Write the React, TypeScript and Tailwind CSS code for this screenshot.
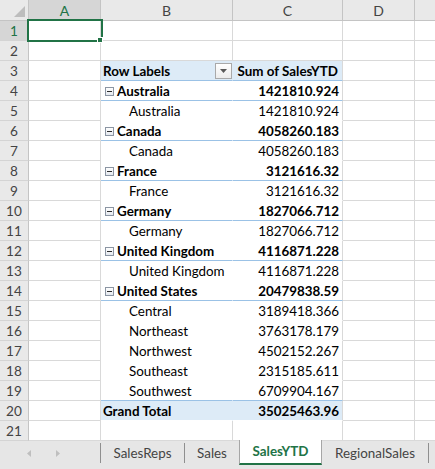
import React from "react";

type Kind = "header" | "country" | "detail" | "total";
type PRow = { kind: Kind; label: string; value: string; last?: boolean };

const pivot: Record<number, PRow> = {
  3: { kind: "header", label: "Row Labels", value: "Sum of SalesYTD" },
  4: { kind: "country", label: "Australia", value: "1421810.924" },
  5: { kind: "detail", label: "Australia", value: "1421810.924" },
  6: { kind: "country", label: "Canada", value: "4058260.183" },
  7: { kind: "detail", label: "Canada", value: "4058260.183" },
  8: { kind: "country", label: "France", value: "3121616.32" },
  9: { kind: "detail", label: "France", value: "3121616.32" },
  10: { kind: "country", label: "Germany", value: "1827066.712" },
  11: { kind: "detail", label: "Germany", value: "1827066.712" },
  12: { kind: "country", label: "United Kingdom", value: "4116871.228" },
  13: { kind: "detail", label: "United Kingdom", value: "4116871.228" },
  14: { kind: "country", label: "United States", value: "20479838.59" },
  15: { kind: "detail", label: "Central", value: "3189418.366" },
  16: { kind: "detail", label: "Northeast", value: "3763178.179" },
  17: { kind: "detail", label: "Northwest", value: "4502152.267" },
  18: { kind: "detail", label: "Southeast", value: "2315185.611" },
  19: { kind: "detail", label: "Southwest", value: "6709904.167", last: true },
  20: { kind: "total", label: "Grand Total", value: "35025463.96" },
};

const font = { fontFamily: "Lato, 'Liberation Sans', sans-serif" };

function Collapse() {
  return (
    <span className="mr-[3px] ml-[4px] flex h-[9px] w-[9px] items-center justify-center border border-[#8b95a3] bg-gradient-to-b from-white to-[#e4e8ee]">
      <span className="h-px w-[5px] bg-[#2b2b2b]" />
    </span>
  );
}

function FilterBtn() {
  return (
    <span className="ml-auto -mt-[2px] flex h-[16px] w-[17px] items-center justify-center border border-[#a9a9a9] bg-gradient-to-b from-white to-[#ececec]">
      <svg width="7" height="4" viewBox="0 0 7 4">
        <path d="M0 0 H7 L3.5 4 Z" fill="#595959" />
      </svg>
    </span>
  );
}

function SheetRow({ n }: { n: number }) {
  const p = pivot[n];
  const sel = n === 1;
  const grid = "border-[#d9d9d9]";
  let bClass = `w-[132px] border-r border-b ${grid}`;
  let cClass = `w-[110px] border-r border-b ${grid}`;
  let bContent: React.ReactNode = null;
  let cContent: React.ReactNode = null;
  if (p) {
    const blue =
      p.kind === "header" || p.kind === "country" || p.last
        ? "border-b-[#9bc2e6]"
        : "border-b-white";
    const fill = p.kind === "header" || p.kind === "total" ? "bg-[#ddebf7]" : "bg-white";
    const bold = p.kind !== "detail" ? "font-bold" : "";
    bClass = `w-[132px] border-r border-r-transparent border-b ${blue} ${fill} flex items-center pt-[2px] ${bold}`;
    cClass = `w-[110px] border-r border-r-[#d9d9d9] border-b ${blue} ${fill} flex items-center justify-end pr-[3px] pt-[2px] ${bold}`;
    if (p.kind === "header") {
      bContent = (
        <>
          <span className="pl-[2px]">{p.label}</span>
          <FilterBtn />
        </>
      );
      cContent = <span className="mr-[1px]">{p.value}</span>;
    } else if (p.kind === "country") {
      bContent = (
        <>
          <Collapse />
          <span>{p.label}</span>
        </>
      );
      cContent = <span>{p.value}</span>;
    } else if (p.kind === "detail") {
      bContent = <span className="pl-[28px]">{p.label}</span>;
      cContent = <span>{p.value}</span>;
    } else {
      bContent = <span className="pl-[2px]">{p.label}</span>;
      cContent = <span>{p.value}</span>;
    }
  }
  return (
    <div className="flex h-[20px] text-[13.4px] text-black">
      <div
        className={`flex w-[29px] items-center justify-center border-r border-b border-r-[#c4c4c4] border-b-[#d4d4d4] pt-[2px] text-[13.6px] ${
          sel ? "bg-[#d6d6d6] text-[#217346]" : "bg-[#e9e9e9] text-[#444]"
        }`}
      >
        {n}
      </div>
      <div className={`w-[72px] border-r border-b ${grid}`} />
      <div className={bClass}>{bContent}</div>
      <div className={cClass}>{cContent}</div>
      <div className={`w-[72px] border-r border-b ${grid}`} />
      <div className={`flex-1 border-b ${grid}`} />
    </div>
  );
}

function Tab({ w, label, active }: { w: string; label: string; active?: boolean }) {
  if (active) {
    return (
      <div
        className={`${w} -mt-px flex h-[25px] items-center justify-center border-x border-b-2 border-x-[#a6a6a6] border-b-[#217346] bg-white font-bold text-[#217346]`}
      >
        {label}
      </div>
    );
  }
  return (
    <div className={`${w} flex h-[24px] items-center justify-center text-[#444]`}>{label}</div>
  );
}

function Sep() {
  return <div className="mt-[2px] h-[20px] w-px bg-[#8f8f8f]" />;
}

export default function App() {
  const nums = Array.from({ length: 21 }, (_, i) => i + 1);
  return (
    <div className="relative h-[469px] w-[435px] overflow-hidden bg-white" style={font}>
      {/* column headers */}
      <div className="flex h-[21px] text-[14px] text-[#444]">
        <div className="relative w-[29px] border-r border-b border-r-[#c4c4c4] border-b-[#c4c4c4] bg-[#e9e9e9]">
          <svg className="absolute right-[3px] bottom-[3px]" width="11" height="11" viewBox="0 0 11 11">
            <path d="M11 0 V11 H0 Z" fill="#bdbdbd" />
          </svg>
        </div>
        <div className="flex w-[72px] items-center justify-center border-r border-b border-r-[#c4c4c4] border-b-[#c4c4c4] bg-[#d6d6d6] pt-px text-[#217346]">
          A
        </div>
        <div className="flex w-[132px] items-center justify-center border-r border-b border-[#c4c4c4] bg-[#e9e9e9] pt-px">
          B
        </div>
        <div className="flex w-[110px] items-center justify-center border-r border-b border-[#c4c4c4] bg-[#e9e9e9] pt-px">
          C
        </div>
        <div className="flex w-[72px] items-center justify-center border-r border-b border-[#c4c4c4] bg-[#e9e9e9] pt-px">
          D
        </div>
        <div className="flex-1 border-b border-[#c4c4c4] bg-[#e9e9e9]" />
      </div>
      {nums.map((n) => (
        <SheetRow key={n} n={n} />
      ))}
      {/* tab bar */}
      <div className="flex h-[28px] items-start bg-[#e6e6e6] text-[13.4px]">
        <div className="flex h-[24px] w-[100px] items-center">
          <svg className="ml-[27px]" width="4" height="7" viewBox="0 0 4 7">
            <path d="M4 0 V7 L0 3.5 Z" fill="#bfbfbf" />
          </svg>
          <svg className="ml-[25px]" width="4" height="7" viewBox="0 0 4 7">
            <path d="M0 0 V7 L4 3.5 Z" fill="#bfbfbf" />
          </svg>
        </div>
        <Sep />
        <Tab w="w-[83px]" label="SalesReps" />
        <Sep />
        <Tab w="w-[54px]" label="Sales" />
        <Tab w="w-[83px]" label="SalesYTD" active />
        <Tab w="w-[106px]" label="RegionalSales" />
        <Sep />
      </div>
      {/* selection box */}
      <div className="absolute top-[19px] left-[27px] h-[23px] w-[76px] border-2 border-[#217346]" />
      <div className="absolute top-[37px] left-[97px] h-[6px] w-[6px] border border-white bg-[#217346]" />
    </div>
  );
}
